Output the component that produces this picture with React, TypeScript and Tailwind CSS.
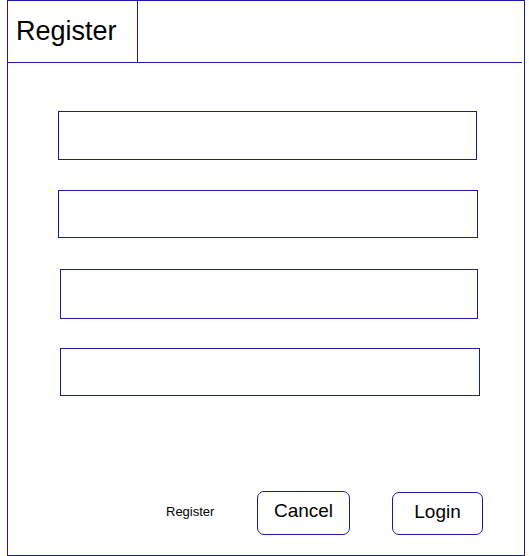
import React from "react";

export default function App() {
  const font = { fontFamily: '"Liberation Sans", Arial, sans-serif' };
  return (
    <div className="w-[529px] h-[556px] bg-white overflow-hidden" style={font}>
      <div className="ml-[7px] w-[518px] h-[556px] border border-[#1a1aa8] flex flex-col">
        <div className="h-[62px] flex border-b border-[#1a1aa8] -ml-px mr-[2px]">
          <div className="w-[131px] border-r border-[#1a1aa8] flex items-center pl-[9px]">
            <span className="text-[27px] leading-none text-black">Register</span>
          </div>
        </div>
        <div className="flex flex-col">
          <input className="mt-[48px] ml-[50px] w-[419px] h-[49px] border border-[#1a1aa8] outline-none" />
          <input className="mt-[30px] ml-[50px] w-[420px] h-[48px] border border-[#1a1aa8] outline-none" />
          <input className="mt-[31px] ml-[52px] w-[418px] h-[50px] border border-[#1a1aa8] outline-none" />
          <input className="mt-[29px] ml-[52px] w-[420px] h-[48px] border border-[#1a1aa8] outline-none" />
        </div>
        <div className="mt-[95px] flex items-start">
          <div className="ml-[158px] w-[91px] h-[44px] pb-[3px] flex items-center text-[13px] text-black">Register</div>
          <button className="w-[93px] h-[44px] pb-[3px] border border-[#1a1aa8] rounded-[7px] text-[19px] text-black bg-white flex items-center justify-center">
            Cancel
          </button>
          <button className="ml-[42px] mt-px w-[91px] h-[43px] pb-[2px] border border-[#1a1aa8] rounded-[7px] text-[19px] text-black bg-white flex items-center justify-center">
            Login
          </button>
        </div>
      </div>
    </div>
  );
}
